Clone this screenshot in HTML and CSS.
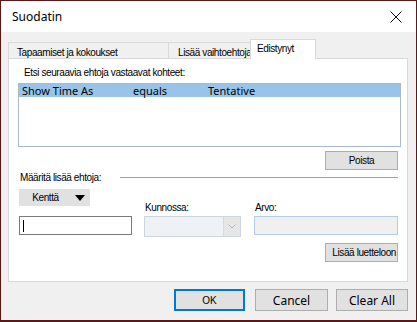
FILE: index.html
```html
<!DOCTYPE html>
<html lang="fi">
<head>
    <meta charset="UTF-8">
    <title>Suodatin</title>
    <link rel="stylesheet" href="styles.css">
</head>
<body>
    <div class="window">
        <div class="titlebar">
            <span class="title">Suodatin</span>
            <svg class="close" width="12" height="12" viewBox="0 0 12 12">
                <path d="M0.5 0.5 L11.5 11.5 M11.5 0.5 L0.5 11.5" stroke="#111" stroke-width="1" fill="none"/>
            </svg>
        </div>

        <div class="tabs">
            <div class="tab tab-first">Tapaamiset ja kokoukset</div>
            <div class="tab tab-second">Lisää vaihtoehtoja</div>
            <div class="tab tab-active">Edistynyt</div>
        </div>

        <div class="panel">
            <div class="label label-find">Etsi seuraavia ehtoja vastaavat kohteet:</div>
            <div class="listbox">
                <div class="list-row selected">
                    <span class="col-field">Show Time As</span>
                    <span class="col-cond">equals</span>
                    <span class="col-value">Tentative</span>
                </div>
            </div>
            <div class="row-right">
                <button class="btn btn-small">Poista</button>
            </div>

            <div class="section-head">
                <span class="label">Määritä lisää ehtoja:</span>
                <span class="rule"></span>
            </div>

            <button class="btn field-btn">Kenttä <span class="caret"></span></button>

            <div class="criteria">
                <div class="crit crit-field">
                    <div class="input input-active"><span class="cursor"></span></div>
                </div>
                <div class="crit crit-cond">
                    <div class="label">Kunnossa:</div>
                    <div class="combo">
                        <span class="combo-arrow">
                            <svg width="8" height="5" viewBox="0 0 8 5"><path d="M0.5 0.5 L4 4 L7.5 0.5" stroke="#b8b8b8" fill="none"/></svg>
                        </span>
                    </div>
                </div>
                <div class="crit crit-value">
                    <div class="label">Arvo:</div>
                    <div class="input input-disabled"></div>
                </div>
            </div>

            <div class="row-right">
                <button class="btn btn-small btn-add">Lisää luetteloon</button>
            </div>
        </div>

        <div class="footer">
            <button class="btn btn-footer btn-default">OK</button>
            <button class="btn btn-footer btn-cancel">Cancel</button>
            <button class="btn btn-footer btn-clear">Clear All</button>
        </div>
    </div>
</body>
</html>
```

FILE: styles.css
```css
* {
    box-sizing: border-box;
}
body {
    margin: 0;
    background-color: #f0f0f0;
    font-family: 'Liberation Sans', Arial, sans-serif;
    color: #000;
}
.window {
    width: 417px;
    height: 322px;
    border: 1px solid #5a1818;
    border-bottom-width: 2px;
    background-color: #f0f0f0;
    overflow: hidden;
}
.titlebar {
    height: 31px;
    background-color: #fff;
    display: flex;
    align-items: center;
    justify-content: space-between;
    padding: 0 14px 0 11px;
}
.title {
    font-family: 'Noto Sans', sans-serif;
    font-size: 12px;
}
.close {
    display: block;
}

/* tabs */
.tabs {
    margin-top: 6px;
    height: 20px;
    padding-left: 7px;
    display: flex;
    align-items: flex-end;
}
.tab {
    height: 16px;
    border: 1px solid #d9d9d9;
    border-bottom: none;
    background-color: #f0f0f0;
    font-size: 10px;
    letter-spacing: -0.4px;
    padding: 4px 0 0 8px;
    color: #000;
}
.tab-first {
    width: 161px;
}
.tab-second {
    width: 81px;
    border-left: none;
    border-right: none;
    padding-left: 9px;
    white-space: nowrap;
    overflow: hidden;
}
.tab-active {
    width: 66px;
    height: 20px;
    background-color: #fff;
    padding: 3px 0 0 6px;
    margin-bottom: -1px;
}

/* panel */
.panel {
    margin: 0 8px 0 7px;
    height: 224px;
    background-color: #fff;
    border: 1px solid #d9d9d9;
    padding: 8px 6px 0 9px;
}
.label {
    font-size: 10px;
    letter-spacing: -0.4px;
    color: #000;
}
.label-find {
    padding-left: 6px;
    height: 15px;
}
.listbox {
    height: 64px;
    border: 1px solid #a7bacd;
    margin-top: 1px;
}
.list-row {
    height: 13px;
    display: flex;
    align-items: center;
    font-family: 'Noto Sans', sans-serif;
    font-size: 11px;
    padding-left: 3px;
}
.selected {
    background-color: #99c4e8;
}
.col-field {
    width: 111px;
}
.col-cond {
    width: 75px;
}
.row-right {
    display: flex;
    justify-content: flex-end;
    padding-right: 3px;
    margin-top: 4px;
}
.btn {
    font-family: 'Noto Sans', sans-serif;
    font-size: 12px;
    background-color: #e1e1e1;
    border: 1px solid #adadad;
    color: #000;
    padding: 0;
    cursor: pointer;
}
.btn-small {
    width: 73px;
    height: 19px;
    font-family: 'Liberation Sans', Arial, sans-serif;
    font-size: 10px;
    letter-spacing: -0.4px;
}
.btn-add {
    text-align: right;
    padding-right: 1px;
    white-space: nowrap;
    margin-top: 4px;
}

.section-head {
    display: flex;
    align-items: center;
    margin-top: 1px;
    padding-left: 2px;
    padding-right: 3px;
    height: 12px;
}
.rule {
    flex: 1;
    height: 1px;
    background-color: #a0a0a0;
    margin-left: 19px;
}

.field-btn {
    display: flex;
    align-items: center;
    justify-content: center;
    gap: 16px;
    width: 71px;
    height: 17px;
    margin: 6px 0 0 1px;
    border: none;
    font-family: 'Liberation Sans', Arial, sans-serif;
    font-size: 10px;
    letter-spacing: -0.4px;
    padding-left: 8px;
}
.caret {
    width: 0;
    height: 0;
    border-left: 5px solid transparent;
    border-right: 5px solid transparent;
    border-top: 6px solid #000;
}

.criteria {
    display: flex;
    align-items: flex-end;
    margin-top: -4px;
}
.crit-field {
    width: 126px;
    padding-left: 1px;
}
.crit-cond {
    width: 110px;
}
.crit-value {
    flex: 1;
    padding-right: 3px;
}
.crit .label {
    padding-left: 1px;
    height: 14px;
}
.input {
    height: 19px;
    border: 1px solid #7a7a7a;
    background-color: #fff;
    position: relative;
}
.input-active {
    width: 113px;
}
.cursor {
    position: absolute;
    left: 3px;
    top: 3px;
    width: 1px;
    height: 12px;
    background-color: #000;
}
.input-disabled {
    background-color: #f0f0f0;
    border-color: #b5cce6;
}
.combo {
    width: 97px;
    height: 21px;
    border: 1px solid #cdd5de;
    background-color: #eef1f5;
    display: flex;
    justify-content: flex-end;
    margin-bottom: -2px;
}
.combo-arrow {
    width: 17px;
    border-left: 1px solid #d9d9d9;
    background-color: #e6e6e6;
    display: flex;
    align-items: center;
    justify-content: center;
}

/* footer */
.footer {
    display: flex;
    justify-content: flex-end;
    gap: 8px;
    padding: 7px 8px 0 0;
}
.btn-footer {
    height: 22px;
}
.btn-default {
    width: 71px;
    border: 2px solid #0078d7;
    font-family: 'Liberation Sans', Arial, sans-serif;
    font-size: 10px;
    margin-right: 2px;
}
.btn-cancel {
    width: 73px;
}
.btn-clear {
    width: 72px;
}
```
